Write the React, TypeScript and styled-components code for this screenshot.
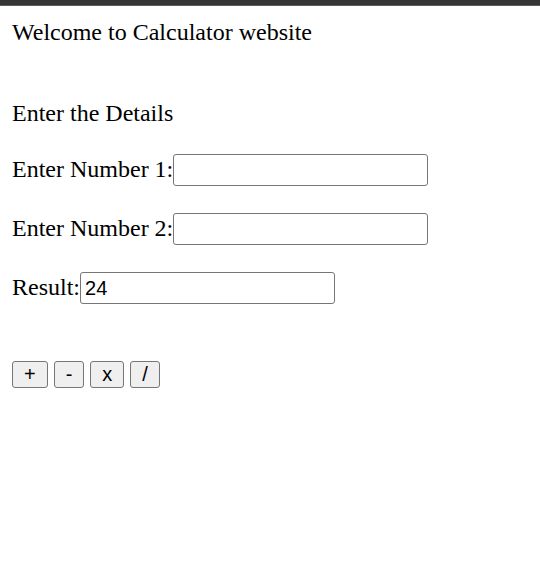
import React, { useState } from "react";
import styled, { createGlobalStyle } from "styled-components";

const GlobalStyle = createGlobalStyle`
  body {
    margin: 0;
    background: #ffffff;
    font-family: "Liberation Serif", "Times New Roman", serif;
    color: #000000;
  }
`;

export default function App() {
  const [num1, setNum1] = useState("");
  const [num2, setNum2] = useState("");
  const [result, setResult] = useState("24");

  const calc = (op: string) => {
    const a = parseFloat(num1);
    const b = parseFloat(num2);
    if (isNaN(a) || isNaN(b)) return;
    if (op === "+") setResult(String(a + b));
    if (op === "-") setResult(String(a - b));
    if (op === "x") setResult(String(a * b));
    if (op === "/") setResult(String(a / b));
  };

  return (
    <>
      <GlobalStyle />
      <TopBar />
      <Page>
        <Heading>Welcome to Calculator website</Heading>
        <Form>
          <Line>Enter the Details</Line>
          <Row>
            <Label>Enter Number 1:</Label>
            <Field value={num1} onChange={(e) => setNum1(e.target.value)} />
          </Row>
          <Row>
            <Label>Enter Number 2:</Label>
            <Field value={num2} onChange={(e) => setNum2(e.target.value)} />
          </Row>
          <Row>
            <Label>Result:</Label>
            <Field value={result} readOnly />
          </Row>
        </Form>
        <Buttons>
          {["+", "-", "x", "/"].map((op) => (
            <OpButton key={op} onClick={() => calc(op)}>
              {op}
            </OpButton>
          ))}
        </Buttons>
      </Page>
    </>
  );
}

const TopBar = styled.div`
  height: 5px;
  background: #353535;
  border-bottom: 1px solid #5c5c5c;
`;

const Page = styled.main`
  padding: 13px 12px;
  font-size: 24px;
  line-height: 27px;
`;

const Heading = styled.div`
  margin-bottom: 54px;
`;

const Form = styled.div`
  display: flex;
  flex-direction: column;
  gap: 27px;
`;

const Line = styled.div``;

const Row = styled.div`
  display: flex;
  align-items: baseline;
`;

const Label = styled.span``;

const Field = styled.input`
  box-sizing: border-box;
  width: 255px;
  height: 32px;
  padding: 0 4px;
  border: 1px solid #767676;
  border-radius: 3px;
  font-family: "Liberation Sans", Arial, sans-serif;
  font-size: 20px;
  color: #000000;
  background: #ffffff;
  outline: none;
`;

const Buttons = styled.div`
  display: flex;
  gap: 6px;
  margin-top: 57px;
`;

const OpButton = styled.button`
  box-sizing: border-box;
  height: 27px;
  padding: 0 11px;
  border: 1px solid #767676;
  border-radius: 3px;
  background: #efefef;
  font-family: "Liberation Sans", Arial, sans-serif;
  font-size: 20px;
  line-height: 23px;
  color: #000000;
`;
